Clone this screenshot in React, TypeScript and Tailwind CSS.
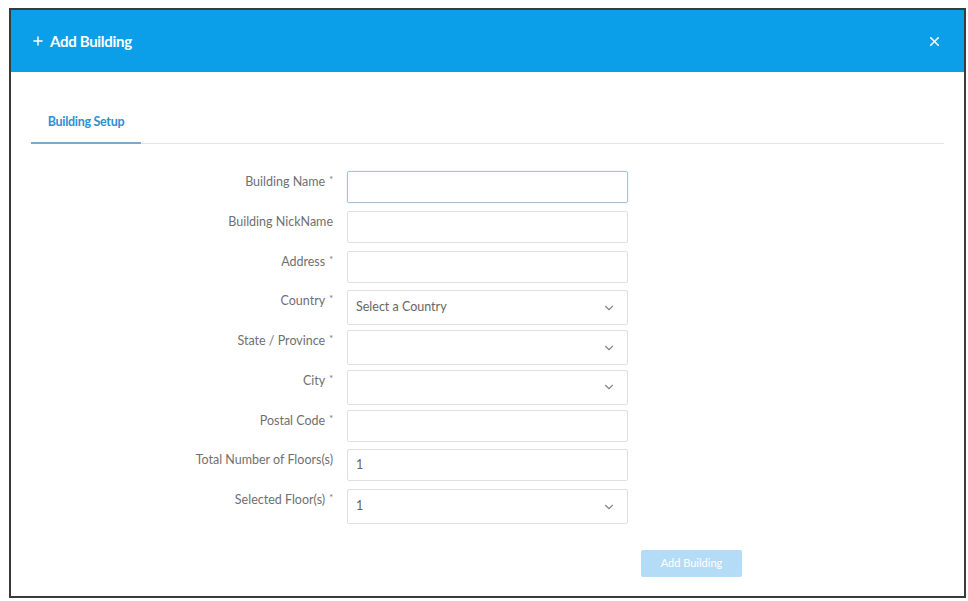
import { ChevronDown, X, Plus } from "lucide-react";

type Field = {
  label: string;
  required?: boolean;
  kind: "input" | "select";
  value?: string;
  placeholder?: string;
  focused?: boolean;
};

const fields: Field[] = [
  { label: "Building Name", required: true, kind: "input", focused: true },
  { label: "Building NickName", kind: "input" },
  { label: "Address", required: true, kind: "input" },
  { label: "Country", required: true, kind: "select", placeholder: "Select a Country" },
  { label: "State / Province", required: true, kind: "select" },
  { label: "City", required: true, kind: "select" },
  { label: "Postal Code", required: true, kind: "input" },
  { label: "Total Number of Floors(s)", kind: "input", value: "1" },
  { label: "Selected Floor(s)", required: true, kind: "select", value: "1" },
];

function FormRow({ field }: { field: Field }) {
  const isSelect = field.kind === "select";
  return (
    <div className="flex h-[39.75px] items-start">
      <div className="w-[322px] pt-[2px] text-right text-[12.5px] text-[#707070]">
        {field.label}
        {field.required && <span className="ml-[4px] align-top text-[9px]">*</span>}
      </div>
      <div
        className={`ml-[14px] flex w-[281px] items-center rounded-[2px] border bg-white px-[8px] text-[12.5px] text-[#666] ${
          isSelect ? "h-[35px]" : "h-[32px]"
        } ${field.focused ? "border-[#a8c4d4] shadow-[0_0_2px_#cfe3ee]" : "border-[#e0e0e0]"}`}
      >
        <span className="flex-1">{field.value ?? field.placeholder ?? ""}</span>
        {isSelect && <ChevronDown size={14} strokeWidth={2} className="mr-[3px] text-[#888]" />}
      </div>
    </div>
  );
}

export default function App() {
  return (
    <div className="h-[601px] w-[968px] bg-white pl-[9px] pt-[8px] font-['Lato','Noto_Sans',sans-serif]">
      <div className="h-[590px] w-[957px] border-2 border-[#3a3a3a] bg-white">
        <div className="flex h-[62px] items-center justify-between bg-[#0b9fea] pl-[20px] pr-[22px] text-white">
          <div className="flex items-center text-[15px] font-bold tracking-[-0.3px]">
            <Plus size={14} strokeWidth={2.5} className="mr-[5px]" />
            Add Building
          </div>
          <X size={15} strokeWidth={2.5} />
        </div>

        <div className="mx-[20px] mt-[27px] flex border-b border-[#e6e6e6]">
          <div className="-mb-px flex h-[45px] w-[110px] items-center justify-center border-b-2 border-[#7aa9cc] pt-[3px] text-[12.5px] font-bold tracking-[-0.3px] text-[#2d8fd6]">
            Building Setup
          </div>
        </div>

        <div className="mt-[27px] flex flex-col">
          {fields.map((f) => (
            <FormRow key={f.label} field={f} />
          ))}
        </div>

        <div className="mt-[20px] pl-[630px]">
          <button className="h-[27px] w-[101px] rounded-[2px] bg-[#b5dcf6] text-[11px] text-white">
            Add Building
          </button>
        </div>
      </div>
    </div>
  );
}
